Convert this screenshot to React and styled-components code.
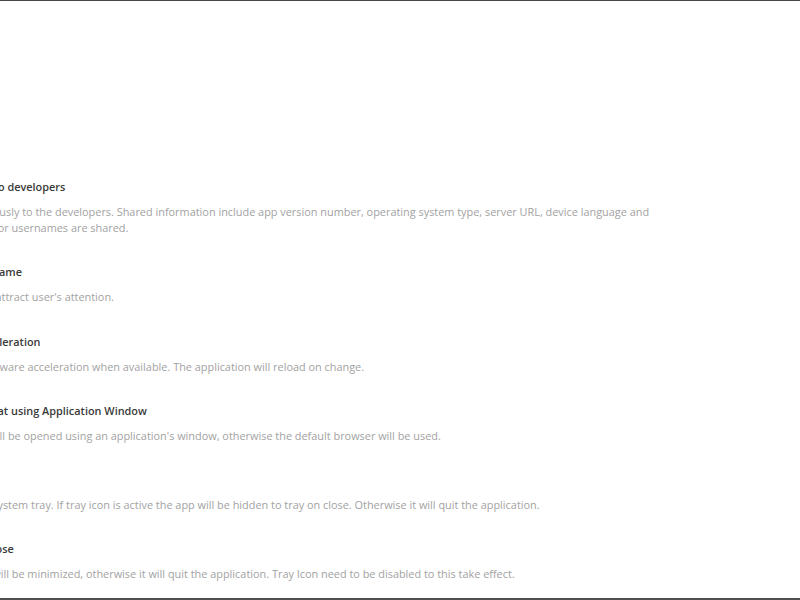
import React from "react";
import styled, { createGlobalStyle } from "styled-components";

const Global = createGlobalStyle`
  html, body { margin: 0; padding: 0; background: #ffffff; overflow: hidden; }
  * { box-sizing: border-box; }
`;

const Frame = styled.div`
  width: 800px;
  height: 600px;
  background: #ffffff;
  border-top: 1px solid #474747;
  border-bottom: 2px solid #505050;
  overflow: hidden;
  display: flex;
  flex-direction: column;
`;

const Scroller = styled.div`
  flex: 1;
  overflow: hidden;
  padding-top: 178px;
`;

const List = styled.div`
  margin-left: -120px;
  width: 920px;
  display: flex;
  flex-direction: column;
  gap: 28.25px;
`;

const Option = styled.div`
  display: flex;
  flex-direction: column;
  gap: 9px;
`;

const Header = styled.div`
  display: flex;
  align-items: center;
  gap: 12px;
`;

const Toggle = styled.span`
  flex: none;
  width: 28px;
  height: 16px;
  border-radius: 8px;
  background: ${(p) => (p.$on ? "#1d74f5" : "#cbced1")};
`;

const Title = styled.div`
  font-family: "Open Sans", "Noto Sans", sans-serif;
  font-size: 10.9px;
  font-weight: 600;
  line-height: 16px;
  color: #3a3a3a;
  white-space: nowrap;
`;

const Description = styled.div`
  font-family: "Open Sans", "Noto Sans", sans-serif;
  font-size: 10.9px;
  line-height: 16px;
  color: #a2a2a2;
  max-width: 783px;
`;

const options = [
  {
    title: "Report errors to developers",
    desc: "Report errors anonymously to the developers. Shared information include app version number, operating system type, server URL, device language and user type. No contents or usernames are shared.",
    on: true,
  },
  {
    title: "Enable Flash Frame",
    desc: "Flashes the window to attract user's attention.",
    on: true,
  },
  {
    title: "Hardware Acceleration",
    desc: "Enables the use of hardware acceleration when available. The application will reload on change.",
    on: true,
  },
  {
    title: "Open Video Chat using Application Window",
    desc: "If enabled video chat will be opened using an application's window, otherwise the default browser will be used.",
    on: true,
  },
  {
    title: "Tray Icon",
    desc: "Show app icon on the system tray. If tray icon is active the app will be hidden to tray on close. Otherwise it will quit the application.",
    on: true,
  },
  {
    title: "Minimize on close",
    desc: "When closed, the app will be minimized, otherwise it will quit the application. Tray Icon need to be disabled to this take effect.",
    on: false,
  },
];

export default function App() {
  return (
    <>
      <Global />
      <Frame>
        <Scroller>
          <List>
            {options.map((o) => (
              <Option key={o.title}>
                <Header>
                  <Toggle $on={o.on} />
                  <Title>{o.title}</Title>
                </Header>
                <Description>{o.desc}</Description>
              </Option>
            ))}
          </List>
        </Scroller>
      </Frame>
    </>
  );
}
